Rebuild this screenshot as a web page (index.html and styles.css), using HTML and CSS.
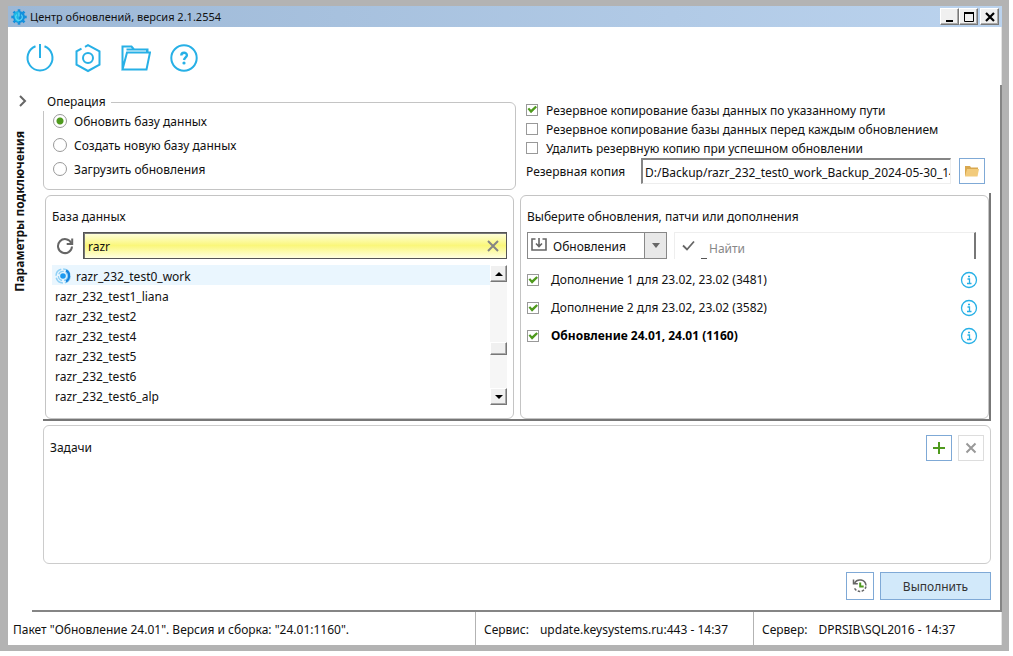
FILE: index.html
```
<!DOCTYPE html>
<html lang="ru">
<head>
<meta charset="utf-8">
<title>Центр обновлений</title>
<link rel="stylesheet" href="styles.css">
</head>
<body>
<div class="window">
  <header class="titlebar">
    <svg class="app-icon" width="16" height="16" viewBox="0 0 16 16"><g fill="#1590dc"><circle cx="8" cy="8" r="6"/><rect x="6.7" y="0.3" width="2.6" height="15.4"/><rect x="0.3" y="6.7" width="15.4" height="2.6"/><g transform="rotate(45 8 8)"><rect x="6.7" y="0.3" width="2.6" height="15.4"/><rect x="0.3" y="6.7" width="15.4" height="2.6"/></g></g><path d="M2.500 5.500 5 2.500h3v11L4.500 12Z" fill="#22c8e8" opacity=".7"/><path d="M5.800 5.600a3.300 3.300 0 1 0 4.400 0M8 3.600v4" fill="none" stroke="#5fd6f5" stroke-width="1.200"/></svg>
    <h1 class="title">Центр обновлений, версия 2.1.2554</h1>
    <div class="window-buttons">
      <button class="win-btn" aria-label="Свернуть"><svg width="12" height="12" viewBox="0 0 12 12"><path d="M2 10h7" stroke="#000" stroke-width="2"/></svg></button>
      <button class="win-btn" aria-label="Развернуть"><svg width="12" height="12" viewBox="0 0 12 12"><path d="M1.500 1.500h9v9h-9z" fill="none" stroke="#000" stroke-width="1"/><path d="M1 2h10" stroke="#000" stroke-width="2"/></svg></button>
      <button class="win-btn win-close" aria-label="Закрыть"><svg width="12" height="12" viewBox="0 0 12 12"><path d="M2 2l8 8M10 2l-8 8" stroke="#000" stroke-width="2.200"/></svg></button>
    </div>
  </header>

  <nav class="toolbar">
    <button class="tool" aria-label="Подключение"><svg width="30" height="30" viewBox="0 0 30 30"><path d="M10.500 3.300a12.500 12.500 0 1 0 9 0M15 1v14" fill="none"/></svg></button>
    <button class="tool" aria-label="Настройки"><svg width="30" height="30" viewBox="0 0 30 30"><path d="M8.500 5.600 3.500 8.300v13.400L15 28l11.500-6.300V8.300L15 2.200l-3 1.600" fill="none"/><circle cx="15" cy="15" r="5" fill="none"/></svg></button>
    <button class="tool" aria-label="Папка"><svg width="30" height="30" viewBox="0 0 30 30"><path d="M1.500 26.500V3.500h9l2.500 3h13.500v3M1.500 26.500l4.500-17h23l-3.500 17Z M5.500 6.500h7M26 6.500v3" fill="none"/></svg></button>
    <button class="tool" aria-label="Справка"><svg width="30" height="30" viewBox="0 0 30 30"><circle cx="15" cy="15" r="12.700" fill="none"/><path d="M12.300 12.500c0-3.700 5.600-3.600 5.600-.3 0 2-2.600 2.200-2.900 4.800" fill="none" stroke-width="2.400"/><circle cx="15" cy="20" r="1.600" fill="#27b0e6" stroke="none"/></svg></button>
  </nav>

  <div class="workspace">
    <aside class="sidebar">
      <button class="expand" aria-label="Развернуть параметры"><svg width="10" height="12" viewBox="0 0 10 12"><path d="M2 1l5 5-5 5" fill="none" stroke="#666" stroke-width="2"/></svg></button>
      <span class="sidebar-label">Параметры подключения</span>
    </aside>

    <main class="main">
      <section class="settings">
        <fieldset class="operation">
          <legend>Операция</legend>
          <label class="radio-row"><input type="radio" name="op" checked>Обновить базу данных</label>
          <label class="radio-row"><input type="radio" name="op">Создать новую базу данных</label>
          <label class="radio-row"><input type="radio" name="op">Загрузить обновления</label>
        </fieldset>
        <div class="backup">
          <label class="check-row"><input type="checkbox" checked>Резервное копирование базы данных по указанному пути</label>
          <label class="check-row"><input type="checkbox">Резервное копирование базы данных перед каждым обновлением</label>
          <label class="check-row"><input type="checkbox">Удалить резервную копию при успешном обновлении</label>
          <div class="path-row">
            <label for="path">Резервная копия</label>
            <input id="path" class="path" type="text" value="D:/Backup/razr_232_test0_work_Backup_2024-05-30_14-37">
            <button class="square" aria-label="Выбрать папку"><svg width="16" height="14" viewBox="0 0 16 14"><path d="M1 12V2h5l1 1.500h7V5" fill="#d9a84f"/><path d="M1 12.500 3 5h12l-1.500 7.500Z" fill="#f2cb7c"/></svg></button>
          </div>
        </div>
      </section>

      <section class="lists">
        <div class="panel databases">
          <label class="panel-title" for="filter">База данных</label>
          <div class="filter-row">
            <button class="refresh" aria-label="Обновить список"><svg width="18" height="18" viewBox="0 0 18 18"><path d="M15.300 6A7 7 0 1 0 16 9.500" fill="none" stroke="#666" stroke-width="2"/><path d="M16.200 1.500V7h-5.500" fill="none" stroke="#666" stroke-width="2"/></svg></button>
            <div class="filter">
              <input id="filter" type="text" value="razr">
              <button class="clear" aria-label="Очистить"><svg width="12" height="12" viewBox="0 0 12 12"><path d="M1 1l10 10M11 1 1 11" stroke="#858585" stroke-width="2"/></svg></button>
            </div>
          </div>
          <div class="list-box">
            <ul class="db-list">
              <li class="selected"><svg width="18" height="16" viewBox="0 0 18 16"><circle cx="8" cy="8" r="7" fill="none" stroke="#8fd0f5" stroke-width="1.500" stroke-dasharray="9 2"/><circle cx="8" cy="8" r="4.600" fill="none" stroke="#8fd0f5" stroke-width="1.300" stroke-dasharray="6 2"/><circle cx="8" cy="8" r="2.800" fill="#1e9af0"/><path d="M11.500 1.500c5 2 5 10 0 13l-1-2c3.500-2 3.500-7 0-9Z" fill="#1684de"/></svg>razr_232_test0_work</li>
              <li>razr_232_test1_liana</li>
              <li>razr_232_test2</li>
              <li>razr_232_test4</li>
              <li>razr_232_test5</li>
              <li>razr_232_test6</li>
              <li>razr_232_test6_alp</li>
            </ul>
            <div class="scrollbar">
              <button class="scroll-btn" aria-label="Вверх"><svg width="8" height="4" viewBox="0 0 8 4"><path d="M0 4 4 0l4 4Z"/></svg></button>
              <div class="track"><div class="thumb"></div></div>
              <button class="scroll-btn" aria-label="Вниз"><svg width="8" height="4" viewBox="0 0 8 4"><path d="M0 0h8L4 4Z"/></svg></button>
            </div>
          </div>
        </div>

        <div class="panel updates">
          <label class="panel-title" for="kind">Выберите обновления, патчи или дополнения</label>
          <div class="search-row">
            <div class="kind">
              <svg class="kind-icon" width="16" height="14" viewBox="0 0 16 14"><path d="M4.500 1H1v11h14V1h-3.500M8 0v8M5 5.500l3 3 3-3" fill="none" stroke="#666" stroke-width="1.600"/></svg>
              <select id="kind"><option>Обновления</option></select>
              <span class="kind-arrow"></span>
            </div>
            <div class="search">
              <svg width="14" height="12" viewBox="0 0 14 12"><path d="M1 5.500 5 9.500 12 1.500" fill="none" stroke="#666" stroke-width="1.800"/></svg>
              <span class="mark"></span>
              <input type="text" placeholder="Найти" aria-label="Найти">
            </div>
          </div>
          <ul class="update-list">
            <li><label><input type="checkbox" checked>Дополнение 1 для 23.02, 23.02 (3481)</label><button class="info" aria-label="Сведения"><svg width="18" height="18" viewBox="0 0 18 18"><circle cx="9" cy="9" r="7.500"/><path d="M7.500 8h2v4.500M7 12.500h4.500M8 5.500h2"/></svg></button></li>
            <li><label><input type="checkbox" checked>Дополнение 2 для 23.02, 23.02 (3582)</label><button class="info" aria-label="Сведения"><svg width="18" height="18" viewBox="0 0 18 18"><circle cx="9" cy="9" r="7.500"/><path d="M7.500 8h2v4.500M7 12.500h4.500M8 5.500h2"/></svg></button></li>
            <li><label class="strong"><input type="checkbox" checked>Обновление 24.01, 24.01 (1160)</label><button class="info" aria-label="Сведения"><svg width="18" height="18" viewBox="0 0 18 18"><circle cx="9" cy="9" r="7.500"/><path d="M7.500 8h2v4.500M7 12.500h4.500M8 5.500h2"/></svg></button></li>
          </ul>
        </div>
      </section>

      <section class="tasks">
        <h2 class="tasks-title">Задачи</h2>
        <button class="square" aria-label="Добавить"><svg width="14" height="14" viewBox="0 0 14 14"><path d="M7 1v12M1 7h12" stroke="#4f9a1e" stroke-width="2"/></svg></button>
        <button class="square muted" aria-label="Удалить"><svg width="12" height="12" viewBox="0 0 12 12"><path d="M1.500 1.500l9 9M10.500 1.500l-9 9" stroke="#999" stroke-width="2"/></svg></button>
      </section>

      <div class="actions">
        <button class="history" aria-label="История"><svg width="16" height="16" viewBox="0 0 16 16"><path d="M2.500 5A6.200 6.200 0 0 1 14 7.500" fill="none" stroke="#666" stroke-width="1.500"/><path d="M14 8.500A6.200 6.200 0 0 1 2 9" fill="none" stroke="#666" stroke-width="1.500" stroke-dasharray="2.500 1.500"/><path d="M1.500 1.500v4.300h4.300" fill="none" stroke="#666" stroke-width="1.500"/><path d="M8.200 4.500v4h3.500" fill="none" stroke="#4f9a1e" stroke-width="2"/></svg></button>
        <button class="run">Выполнить</button>
      </div>
    </main>
  </div>

  <footer class="status">
    <div class="cell package">Пакет "Обновление 24.01". Версия и сборка: "24.01:1160".</div>
    <div class="cell service"><span>Сервис:</span><span>update.keysystems.ru:443 - 14:37</span></div>
    <div class="cell server"><span>Сервер:</span><span>DPRSIB\SQL2016 - 14:37</span></div>
  </footer>
</div>
</body>
</html>
```
FILE: styles.css
```
* { box-sizing: border-box; }

body {
  margin: 0;
  padding: 0 4px 5px 0;
  min-height: 100vh;
  display: flex;
  background: #fff;
  color: #111;
  font: 12px/18px "Noto Sans", "Open Sans", sans-serif;
}

button, input, select { font: inherit; color: inherit; }
button { padding: 0; border: 0; background: none; display: flex; align-items: center; justify-content: center; }
ul { list-style: none; margin: 0; padding: 0; }
svg { flex: none; display: block; }

.window {
  flex: 1;
  display: flex;
  flex-direction: column;
  min-width: 0;
  background: #fff;
  border: 6px solid #b3b3b3;
  border-width: 6px 7px 6px 8px;
  box-shadow: inset -1px 0 #e4e4e4;
}

/* Title bar */
.titlebar {
  display: flex;
  align-items: center;
  height: 21px;
  padding: 0 3px;
  background: linear-gradient(90deg, #9db8d6, #bbd3ee);
}
.title { flex: 1; margin: 0 0 0 3px; font-size: 11px; font-weight: 400; line-height: 20px; }
.window-buttons { display: flex; }
.win-btn, .scroll-btn, .thumb {
  background: #f0f0f0;
  border: 1px solid;
  border-color: #fff #777 #777 #fff;
  box-shadow: inset -1px -1px #aaa;
}
.win-btn { width: 19px; height: 17px; }
.win-close { margin-left: 2px; }

/* Toolbar */
.toolbar { display: flex; gap: 18px; padding: 16px 17px; height: 58px; }
.tool { width: 30px; height: 30px; }
.tool svg { stroke: #27b0e6; stroke-width: 2; }

/* Work area */
.workspace { flex: 1; display: flex; }
.sidebar { width: 24px; display: flex; flex-direction: column; align-items: center; padding-top: 10px; gap: 24px; }
.expand { width: 24px; height: 12px; padding-left: 5px; }
.sidebar-label { writing-mode: vertical-rl; transform: rotate(180deg); font-weight: 700; line-height: 22px; white-space: nowrap; }

.main {
  flex: 1;
  min-width: 0;
  display: flex;
  flex-direction: column;
  padding: 8px 9px 10px 11px;
  border-right: 2px solid #858585;
  border-bottom: 2px solid #858585;
}

.settings { display: grid; grid-template-columns: 473fr 475fr; }
.operation { margin: 0 0 3px; padding: 0 0 7px 9px; min-width: 0; border: 1px solid #c4c4c4; border-radius: 6px; }
.operation legend { margin-left: -10px; padding: 0 5px 0 4px; background: #fff; }
.radio-row { display: flex; align-items: center; height: 24px; gap: 7px; }
.radio-row:first-of-type { margin-top: -1px; }

input[type="radio"] {
  appearance: none;
  flex: none;
  margin: 0 0 2px;
  width: 14px;
  height: 14px;
  border: 1px solid #999;
  border-radius: 50%;
  background: #fff;
}
input[type="radio"]:checked { background: radial-gradient(circle, #4f9a1e 3px, #fff 4px); }

input[type="checkbox"] {
  appearance: none;
  flex: none;
  margin: 0;
  width: 12px;
  height: 12px;
  border: 1px solid #999;
  background: #fff;
}
input[type="checkbox"]:checked::before {
  content: "";
  display: block;
  height: 10px;
  background: #4f9a1e;
  clip-path: polygon(5% 45%, 22% 32%, 40% 52%, 84% 12%, 100% 28%, 40% 88%);
}

.backup { padding: 8px 6px 0 10px; min-width: 0; }
.check-row { display: flex; align-items: center; height: 19px; gap: 8px; white-space: nowrap; }
.check-row input { margin-bottom: 2px; }
.path-row { display: flex; align-items: center; gap: 8px; height: 26px; }
.path-row label { flex: 0 0 107px; padding-top: 2px; }
.path {
  flex: 1;
  min-width: 0;
  height: 26px;
  padding: 2px 0 0 2px;
  border: 1px solid #eee;
  border-top: 2px solid #858585;
  border-left: 2px solid #858585;
}
.square { flex: none; width: 26px; height: 26px; border: 1px solid #7fa9d6; background: #fff; }
.muted { border-color: #ddd; }

/* Databases and updates */
.lists {
  display: grid;
  grid-template-columns: 1fr 1fr;
  gap: 6px;
  height: 228px;
  padding: 2px 0 0 2px;
  border-right: 2px solid #777;
  border-bottom: 2px solid #777;
}
.panel { min-width: 0; padding: 12px 6px; border: 1px solid #c4c4c4; border-radius: 6px; }
.panel-title { display: block; margin-bottom: 6px; }

.filter-row { display: flex; align-items: center; height: 27px; }
.refresh { width: 31px; padding-right: 5px; height: 24px; }
.filter {
  flex: 1;
  display: flex;
  align-items: center;
  height: 27px;
  border: 1px solid #555;
  box-shadow: inset 1px 1px #777;
  background: linear-gradient(#ffffe0, #faf77a 50%, #ffffe0);
}
.filter input { flex: 1; min-width: 0; padding: 2px 0 0 4px; border: 0; background: none; }
.clear { width: 26px; height: 22px; }

.list-box { display: flex; height: 140px; margin-top: 6px; }
.db-list { flex: 1; min-width: 0; }
.db-list li { display: flex; align-items: center; height: 20px; padding: 3px 0 0 3px; gap: 3px; }
.db-list .selected { background: #eaf6fe; }
.db-list svg { margin-bottom: 2px; }
.scrollbar { width: 17px; display: flex; flex-direction: column; background: #f6f6f6; }
.scroll-btn { height: 17px; }
.track { flex: 1; display: flex; flex-direction: column; padding-bottom: 33px; }
.thumb { height: 13px; margin-top: auto; }

.search-row { display: flex; gap: 7px; height: 27px; margin-right: 6px; }
.kind { position: relative; flex: 0 0 140px; }
.kind-icon { position: absolute; left: 4px; top: 6px; }
.kind select {
  appearance: none;
  width: 100%;
  height: 27px;
  padding: 3px 24px 0 25px;
  border: 1px solid #888;
  border-radius: 0;
  background: linear-gradient(90deg, #888 1px, #e8e8e8 1px) right / 22px 100% no-repeat #fff;
}
.kind-arrow {
  position: absolute;
  right: 7px;
  top: 11px;
  border: 4px solid transparent;
  border-top: 5px solid #666;
  border-bottom: 0;
  pointer-events: none;
}
.search {
  flex: 1;
  min-width: 0;
  display: flex;
  align-items: center;
  padding-left: 7px;
  border: 1px solid #eee;
  border-right: 2px solid #777;
  border-bottom: 0;
}
.mark { align-self: flex-end; width: 6px; height: 1px; margin: 0 2px 0 5px; background: #555; }
.search input { flex: 1; min-width: 0; padding: 6px 0 0; border: 0; background: none; }
.search input::placeholder { color: #888; opacity: 1; }

.update-list { padding-top: 7px; }
.update-list li { display: flex; align-items: center; justify-content: space-between; height: 28px; padding-right: 4px; }
.update-list label { display: flex; align-items: center; gap: 12px; }
.strong { font-weight: 700; color: #000; }
.info svg { fill: none; stroke: #27b0e6; stroke-width: 1.3; }

/* Tasks */
.tasks {
  flex: 1;
  display: flex;
  align-items: flex-start;
  gap: 6px;
  min-height: 60px;
  margin-top: 4px;
  padding: 9px 6px;
  border: 1px solid #ccc;
  border-radius: 6px;
}
.tasks-title { flex: 1; margin: 0; font-size: 12px; font-weight: 400; line-height: 26px; }

.actions { display: flex; justify-content: flex-end; gap: 6px; padding-top: 8px; }
.history, .run { height: 28px; border: 1px solid #7fa9d6; background: #fff; }
.history { width: 28px; }
.run { width: 111px; padding-top: 2px; background: #d2e9fa; color: #333; }

/* Status bar */
.status { display: grid; grid-template-columns: 467fr 278fr 249fr; height: 33px; }
.cell { display: flex; align-items: center; min-width: 0; padding: 2px 8px 0; white-space: nowrap; }
.package { padding-left: 5px; }
.service, .server { gap: 11px; border-left: 1px solid #b3b3b3; }
```
